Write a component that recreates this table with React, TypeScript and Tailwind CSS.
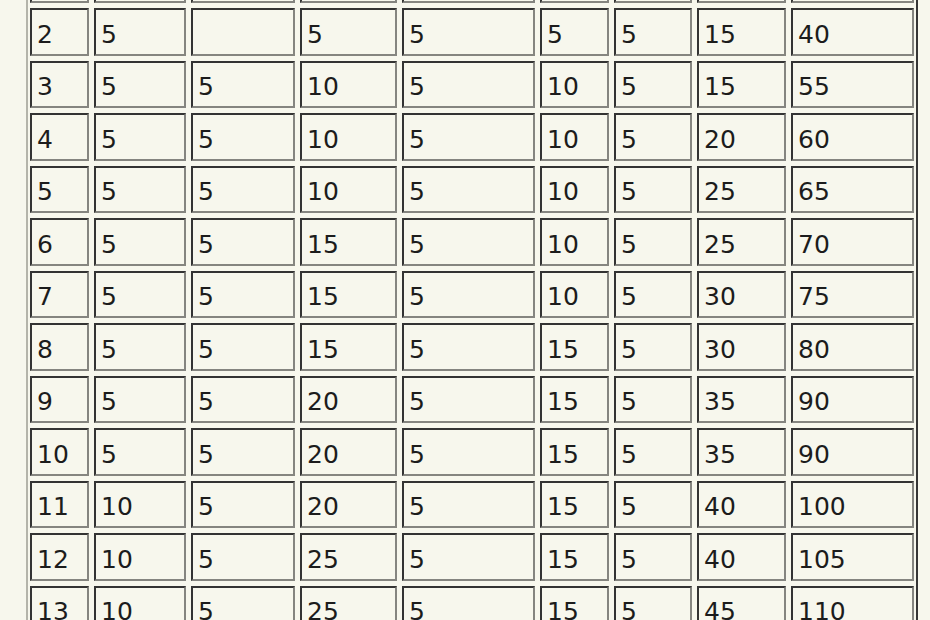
const rows: string[][] = [
  ["", "", "", "", "", "", "", "", ""],
  ["2", "5", "", "5", "5", "5", "5", "15", "40"],
  ["3", "5", "5", "10", "5", "10", "5", "15", "55"],
  ["4", "5", "5", "10", "5", "10", "5", "20", "60"],
  ["5", "5", "5", "10", "5", "10", "5", "25", "65"],
  ["6", "5", "5", "15", "5", "10", "5", "25", "70"],
  ["7", "5", "5", "15", "5", "10", "5", "30", "75"],
  ["8", "5", "5", "15", "5", "15", "5", "30", "80"],
  ["9", "5", "5", "20", "5", "15", "5", "35", "90"],
  ["10", "5", "5", "20", "5", "15", "5", "35", "90"],
  ["11", "10", "5", "20", "5", "15", "5", "40", "100"],
  ["12", "10", "5", "25", "5", "15", "5", "40", "105"],
  ["13", "10", "5", "25", "5", "15", "5", "45", "110"],
];

export default function App() {
  return (
    <div
      className="h-[620px] w-[930px] overflow-hidden bg-[#f7f7ed] text-[#1c1c1c]"
      style={{ fontFamily: '"DejaVu Sans", Verdana, sans-serif' }}
    >
      {/* table frame, outset border */}
      <div className="ml-[26px] h-[700px] w-[892px] border-x-2 border-l-[#b4b4aa] border-r-[#363636] px-[2px]">
        <div className="-mt-[44.5px] grid grid-cols-[59px_92px_104px_97px_133px_69px_78px_89px_123px] gap-x-[5px] gap-y-[5px]">
          {rows.flatMap((row, r) =>
            row.map((cell, c) => (
              <div
                key={`${r}-${c}`}
                className="flex h-[47.5px] items-center border-2 border-t-[#333] border-l-[#333] border-b-[#858580] border-r-[#858580] pl-[5px] pt-[5px] text-[25px] leading-none"
              >
                {cell}
              </div>
            ))
          )}
        </div>
      </div>
    </div>
  );
}
